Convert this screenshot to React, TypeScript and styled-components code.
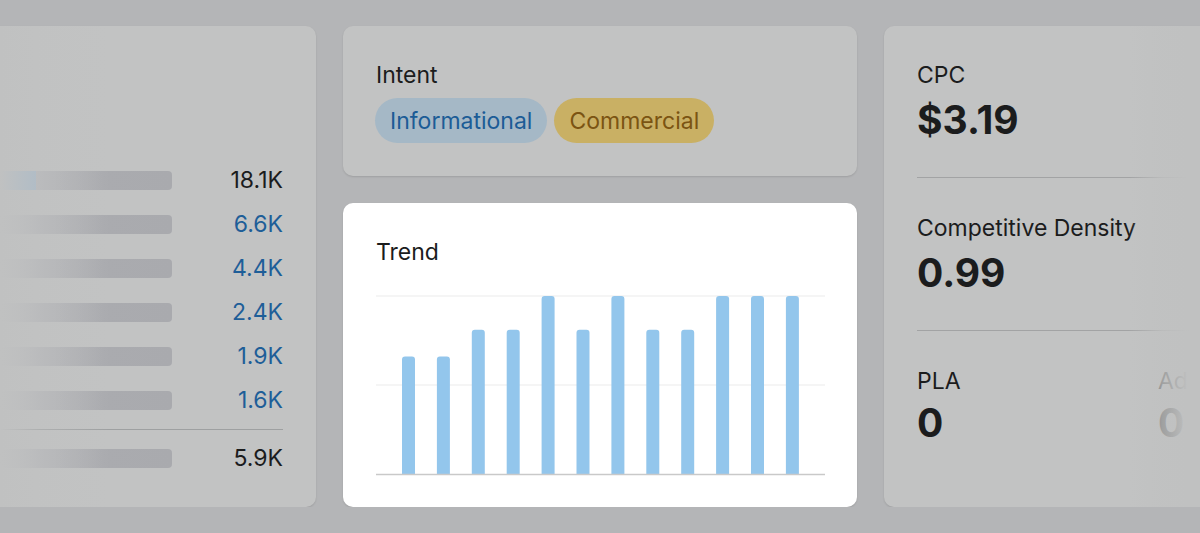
import styled, { createGlobalStyle } from "styled-components";

const GlobalStyle = createGlobalStyle`
    html, body {
        margin: 0;
        padding: 0;
        background: #b4b5b7;
        overflow: hidden;
    }
    body {
        font-family: Inter, "Noto Sans", "Liberation Sans", sans-serif;
        color: #1b1c1d;
    }
`

const Page = styled.main`
    display: grid;
    grid-template-columns: 316px 514px 1fr;
    column-gap: 27px;
    padding-top: 26px;
    height: 481px;
`

const Card = styled.section<{ $lit?: boolean }>`
    position: relative;
    background: ${({ $lit }) => ($lit ? "#ffffff" : "#c2c3c3")};
    border-radius: 10px;
    box-shadow: 0 1px 2px rgba(0, 0, 0, 0.12);
    overflow: hidden;
`

/* Left: volume by country (cut off, faded) */

const VolumeCard = styled(Card)`
    border-radius: 0 10px 10px 0;
    display: flex;
    flex-direction: column;
    justify-content: flex-end;
    padding: 0 33px 27px 0;
`

const FadeLeft = styled.div`
    position: absolute;
    inset: 0;
    background: linear-gradient(to right, #c0c1c1 0px, rgba(192, 193, 193, 0.45) 40px, rgba(192, 193, 193, 0) 110px);
    pointer-events: none;
`

const VolumeRow = styled.div`
    display: grid;
    grid-template-columns: 172px 1fr;
    align-items: center;
    height: 44px;
`

const Track = styled.div`
    height: 19px;
    border-radius: 0 4px 4px 0;
    background: linear-gradient(to right, #bcbdbf, #aaabaf 60%, #a9aaae);
    overflow: hidden;
`

const Fill = styled.div`
    height: 100%;
    background: #a2b8cb;
`

const Volume = styled.span<{ $link?: boolean }>`
    font-size: 23px;
    line-height: 28px;
    text-align: right;
    color: ${({ $link }) => ($link ? "#1e5e98" : "#1b1c1d")};
`

const RowDivider = styled.hr`
    margin: 7px 0 6px 0;
    border: none;
    border-top: 1px solid #9ea0a1;
`

/* Middle column */

const MiddleColumn = styled.div`
    display: flex;
    flex-direction: column;
    gap: 27px;
`

const IntentCard = styled(Card)`
    height: 150px;
    padding: 35px 32px 0;
    box-sizing: border-box;
`

const Label = styled.div`
    font-size: 23px;
    line-height: 28px;
    color: #1b1c1d;
    white-space: nowrap;
`

const IntentLabel = styled(Label)`
    padding-left: 1px;
`

const Pills = styled.div`
    display: flex;
    gap: 7px;
    margin-top: 9px;
`

const Pill = styled.span<{ $kind: "info" | "commercial" }>`
    display: inline-flex;
    align-items: center;
    height: 45px;
    padding: 0 15px;
    border-radius: 23px;
    font-size: 23px;
    background: ${({ $kind }) => ($kind === "info" ? "#a5b8c6" : "#c9b064")};
    color: ${({ $kind }) => ($kind === "info" ? "#1c5c96" : "#7b5412")};
`

const TrendCard = styled(Card)`
    flex: 1;
    padding: 35px 32px 0 33px;
    z-index: 2;
`

const Chart = styled.svg`
    display: block;
    margin-top: 29px;
`

/* Right: keyword metrics (cut off, faded) */

const MetricsCard = styled(Card)`
    border-radius: 10px 0 0 10px;
    padding: 35px 0 0 33px;
`

const FadeRight = styled.div`
    position: absolute;
    inset: 0;
    background: linear-gradient(to right, rgba(192, 193, 193, 0) 245px, rgba(192, 193, 193, 0.8) 278px, #c0c1c1 305px);
    pointer-events: none;
`

const Metric = styled.div`
    display: flex;
    flex-direction: column;
    gap: 9px;
    padding-bottom: 35px;
`

const MetricDivider = styled.hr`
    margin: 0 0 36px 0;
    border: none;
    border-top: 1px solid #a2a3a4;
`

const MetricPair = styled.div`
    display: flex;
`

const MetricCell = styled(Metric)`
    flex: 0 0 241px;
    gap: 6px;
`

const Value = styled.div`
    font-size: 39px;
    line-height: 44px;
    font-weight: 700;
    color: #1b1c1d;
`

const volumes = [
    { value: "18.1K", link: false, fill: 36 },
    { value: "6.6K", link: true, fill: 0 },
    { value: "4.4K", link: true, fill: 0 },
    { value: "2.4K", link: true, fill: 0 },
    { value: "1.9K", link: true, fill: 0 },
    { value: "1.6K", link: true, fill: 0 },
];

const trend = [0.66, 0.66, 0.81, 0.81, 1, 0.81, 1, 0.81, 0.81, 1, 1, 1];

const TrendChart = () => {
    const w = 449;
    const top = 1;
    const base = 179;
    const h = base - top;
    return (
        <Chart width={w} height={181} viewBox={`0 0 ${w} 181`}>
            <line x1={0} x2={w} y1={top} y2={top} stroke="#ebebeb" strokeWidth={1} />
            <line x1={0} x2={w} y1={top + h / 2} y2={top + h / 2} stroke="#ebebeb" strokeWidth={1} />
            {trend.map((v, i) => {
                const bh = h * v;
                const x = 26 + i * 34.9;
                return (
                    <path
                        key={i}
                        d={`M${x} ${base} V${base - bh + 3} Q${x} ${base - bh} ${x + 3} ${base - bh} H${x + 10} Q${x + 13} ${base - bh} ${x + 13} ${base - bh + 3} V${base} Z`}
                        fill="#93c6ec"
                    />
                );
            })}
            <line x1={0} x2={w} y1={base + 0.5} y2={base + 0.5} stroke="#c9c9c9" strokeWidth={1.5} />
        </Chart>
    );
};

export default function App() {
    return (
        <>
            <GlobalStyle />
            <Page>
                <VolumeCard>
                    {volumes.map((row) => (
                        <VolumeRow key={row.value}>
                            <Track>
                                <Fill style={{ width: row.fill }} />
                            </Track>
                            <Volume $link={row.link}>{row.value}</Volume>
                        </VolumeRow>
                    ))}
                    <RowDivider />
                    <VolumeRow>
                        <Track />
                        <Volume>5.9K</Volume>
                    </VolumeRow>
                    <FadeLeft />
                </VolumeCard>

                <MiddleColumn>
                    <IntentCard>
                        <IntentLabel>Intent</IntentLabel>
                        <Pills>
                            <Pill $kind="info">Informational</Pill>
                            <Pill $kind="commercial">Commercial</Pill>
                        </Pills>
                    </IntentCard>
                    <TrendCard $lit>
                        <Label>Trend</Label>
                        <TrendChart />
                    </TrendCard>
                </MiddleColumn>

                <MetricsCard>
                    <Metric>
                        <Label>CPC</Label>
                        <Value>$3.19</Value>
                    </Metric>
                    <MetricDivider />
                    <Metric>
                        <Label>Competitive Density</Label>
                        <Value>0.99</Value>
                    </Metric>
                    <MetricDivider />
                    <MetricPair>
                        <MetricCell>
                            <Label>PLA</Label>
                            <Value>0</Value>
                        </MetricCell>
                        <MetricCell>
                            <Label>Ads</Label>
                            <Value>0</Value>
                        </MetricCell>
                    </MetricPair>
                    <FadeRight />
                </MetricsCard>
            </Page>
        </>
    );
}
